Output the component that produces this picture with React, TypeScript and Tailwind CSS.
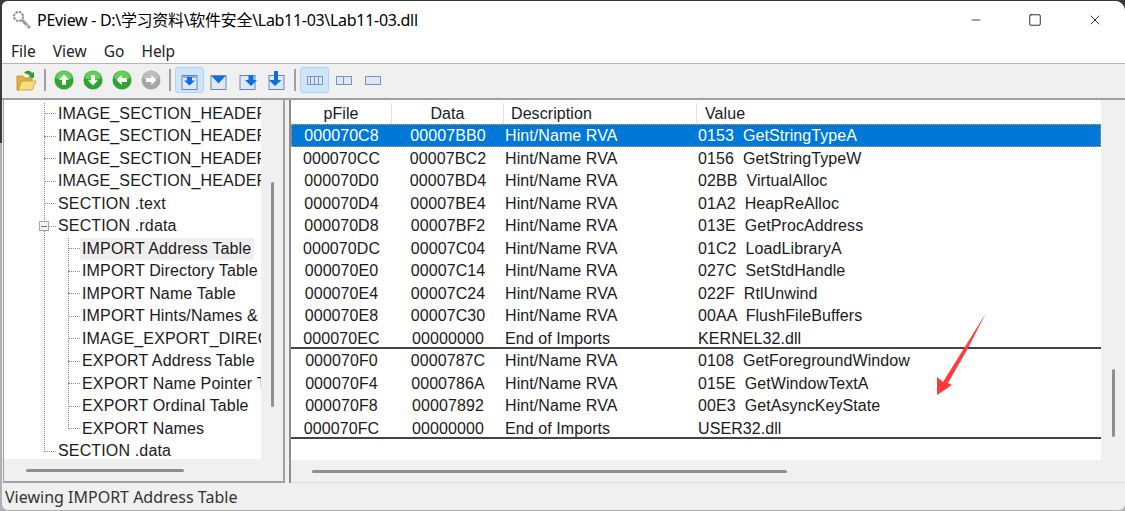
import React from "react";
import { Minus, Square, X } from "lucide-react";

const treeTop = ["IMAGE_SECTION_HEADER", "IMAGE_SECTION_HEADER", "IMAGE_SECTION_HEADER", "IMAGE_SECTION_HEADER", "SECTION .text"];
const treeChildren = [
  "IMPORT Address Table",
  "IMPORT Directory Table",
  "IMPORT Name Table",
  "IMPORT Hints/Names &",
  "IMAGE_EXPORT_DIREC",
  "EXPORT Address Table",
  "EXPORT Name Pointer T",
  "EXPORT Ordinal Table",
  "EXPORT Names",
];

const rows = [
  ["000070C8", "00007BB0", "Hint/Name RVA", "0153  GetStringTypeA"],
  ["000070CC", "00007BC2", "Hint/Name RVA", "0156  GetStringTypeW"],
  ["000070D0", "00007BD4", "Hint/Name RVA", "02BB  VirtualAlloc"],
  ["000070D4", "00007BE4", "Hint/Name RVA", "01A2  HeapReAlloc"],
  ["000070D8", "00007BF2", "Hint/Name RVA", "013E  GetProcAddress"],
  ["000070DC", "00007C04", "Hint/Name RVA", "01C2  LoadLibraryA"],
  ["000070E0", "00007C14", "Hint/Name RVA", "027C  SetStdHandle"],
  ["000070E4", "00007C24", "Hint/Name RVA", "022F  RtlUnwind"],
  ["000070E8", "00007C30", "Hint/Name RVA", "00AA  FlushFileBuffers"],
  ["000070EC", "00000000", "End of Imports", "KERNEL32.dll"],
  ["000070F0", "0000787C", "Hint/Name RVA", "0108  GetForegroundWindow"],
  ["000070F4", "0000786A", "Hint/Name RVA", "015E  GetWindowTextA"],
  ["000070F8", "00007892", "Hint/Name RVA", "00E3  GetAsyncKeyState"],
  ["000070FC", "00000000", "End of Imports", "USER32.dll"],
];

function KeyIcon() {
  return (
    <svg width="22" height="22" viewBox="0 0 22 22" className="shrink-0">
      <circle cx="7.5" cy="7.5" r="4.5" fill="none" stroke="#8a8a8a" strokeWidth="2" strokeDasharray="2.5 1" />
      <path d="M11 11l8 8" stroke="#9a9a9a" strokeWidth="3" />
      <path d="M15 18l2-2" stroke="#d0d0d0" strokeWidth="2" />
    </svg>
  );
}

function OpenIcon() {
  return (
    <svg width="22" height="24" viewBox="0 0 22 24">
      <path d="M2 8h6l2 2h7v4H7l-3 8H2z" fill="#e0b040" stroke="#b98a22" strokeWidth="0.8" />
      <path d="M7 13h14l-4 9H3z" fill="#f7dc82" stroke="#c09a30" strokeWidth="0.8" />
      <path d="M9 5c2-3 6-3 8 0l2-1v6l-6-1 2-1c-1-2-4-2-6-3z" fill="#2e9e32" />
    </svg>
  );
}

function NavIcon({ rotate, gray }: { rotate: number; gray?: boolean }) {
  return (
    <svg width="20" height="20" viewBox="0 0 20 20">
      <circle cx="10" cy="10" r="9.5" fill={gray ? "#a6a6a6" : "#2fa52f"} />
      <path d="M2 8a8 7 0 0 1 16 0c-3 2-13 2-16 0z" fill={gray ? "#bdbdbd" : "#63cf55"} />
      <g transform={`rotate(${rotate} 10 10)`}>
        <path d="M10 4.5l5 5.2h-3V15H8V9.700h-3z" fill="#fff" />
      </g>
    </svg>
  );
}

function BoxIcon({ variant }: { variant: number }) {
  return (
    <svg width="20" height="22" viewBox="0 0 20 22">
      <rect x="2" y="6.500" width="15" height="14" fill="#dfe8f6" stroke="#6d87b0" />
      {variant === 0 && <path d="M3 7h13v2H3z" fill="#8fb0dc" />}
      {variant === 0 && <path d="M9.500 16.500l5.500-5h-3V8H7v3.500H4z" fill="#0a6fe0" />}
      {variant === 1 && <path d="M2.500 7h14l-7 7.500z" fill="#0a6fe0" />}
      {variant === 2 && <path d="M13 17l6-6h-3.500V6.500h-5V11H7z" fill="#0a6fe0" />}
      {variant === 3 && <path d="M8 17l6.500-6H11V2H7v9H2z" fill="#0a6fe0" />}
    </svg>
  );
}

function PaneIcon({ cells }: { cells: number }) {
  return (
    <div className="flex h-[9px] w-[16px] border border-[#7c93b8] bg-[#dbe6f6]">
      {Array.from({ length: cells }).map((_, i) => (
        <div key={i} className="flex-1 border-r border-[#7c93b8] last:border-r-0" />
      ))}
    </div>
  );
}

function ToolButton({ active, children }: { active?: boolean; children: React.ReactNode }) {
  return (
    <div className={`flex h-[26px] w-[29px] items-center justify-center rounded-[3px] border ${active ? "border-[#a9d5f8] bg-[#cde6fb]" : "border-transparent"}`}>
      {children}
    </div>
  );
}

function Sep({ className }: { className: string }) {
  return <div className={`h-[22px] w-[2px] bg-[#a0a0a0] ${className}`} />;
}

function TreeRow({ label, selected, width }: { label: string; selected?: boolean; width: string }) {
  return (
    <div className="flex h-[22.5px] items-center">
      <div className="w-[12px] shrink-0 border-t border-dotted border-[#8a8a8a]" />
      <span className={`flex h-[22.5px] items-center overflow-hidden whitespace-pre px-[2px] ${width} ${selected ? "bg-[#efefef] pr-[3px]" : ""}`}>{label}</span>
    </div>
  );
}

export default function App() {
  return (
    <div className="h-[511px] w-[1125px] overflow-hidden bg-[linear-gradient(#3a3a3a_28%,#b0b0b0_28%)] pt-px pl-[2px] font-['Liberation_Sans',sans-serif] text-[16px] tracking-[0.15px] text-[#1a1a1a]">
      <div className="flex h-[509px] w-[1123px] flex-col overflow-hidden rounded-tr-[10px] rounded-tl-[6px] rounded-b-[6px] bg-[#f0f0f0]">
        {/* title bar */}
        <div className="flex h-[38px] shrink-0 items-center bg-white pl-[9px]">
          <KeyIcon />
          <span className="ml-[4px] font-['Noto_Sans','Noto_Sans_CJK_SC',sans-serif] text-[16px] tracking-[-0.3px] text-black">PEview - D:\学习资料\软件安全\Lab11-03\Lab11-03.dll</span>
          <div className="ml-auto flex items-center gap-[45px] pr-[22px]">
            <Minus size={14} strokeWidth={1.2} className="text-black" />
            <Square size={14} strokeWidth={1.4} className="text-black" />
            <X size={16} strokeWidth={1.2} className="text-black" />
          </div>
        </div>

        {/* menu */}
        <div className="flex h-[25px] shrink-0 items-center border-b border-[#b4b4b4] bg-white pt-[2px] pl-[9px] font-['Noto_Sans',sans-serif] text-[15.5px] tracking-normal text-[#222]">
          <span className="mr-[17px]">File</span>
          <span className="mr-[17px]">View</span>
          <span className="mr-[17px]">Go</span>
          <span>Help</span>
        </div>

        {/* toolbar */}
        <div className="flex h-[34px] shrink-0 items-center pb-[2px] pl-[9px]">
          <ToolButton><OpenIcon /></ToolButton>
          <Sep className="mr-[3px] ml-[4px]" />
          <ToolButton><NavIcon rotate={0} /></ToolButton>
          <ToolButton><NavIcon rotate={180} /></ToolButton>
          <ToolButton><NavIcon rotate={270} /></ToolButton>
          <ToolButton><NavIcon rotate={90} gray /></ToolButton>
          <Sep className="mr-[4px] ml-[4px]" />
          <ToolButton active><BoxIcon variant={0} /></ToolButton>
          <ToolButton><BoxIcon variant={1} /></ToolButton>
          <ToolButton><BoxIcon variant={2} /></ToolButton>
          <ToolButton><BoxIcon variant={3} /></ToolButton>
          <Sep className="mr-[4px] ml-[3px]" />
          <ToolButton active><PaneIcon cells={4} /></ToolButton>
          <ToolButton><PaneIcon cells={2} /></ToolButton>
          <ToolButton><PaneIcon cells={1} /></ToolButton>
        </div>

        {/* panes */}
        <div className="flex h-[385px] shrink-0 border-t-2 border-[#a0a0a0]">
          {/* tree */}
          <div className="ml-[1px] flex w-[282px] shrink-0 flex-col border-l border-r-2 border-b-2 border-[#a0a0a0]">
            <div className="flex h-[359px] shrink-0">
              <div className="w-[257px] shrink-0 overflow-hidden bg-white pt-[2.5px] pl-[40px]">
                <div className="relative whitespace-nowrap">
                  <div className="absolute top-0 bottom-[11px] left-0 border-l border-dotted border-[#8a8a8a]" />
                  {treeTop.map((t, i) => (
                    <TreeRow key={i} label={t} width="max-w-[205px]" />
                  ))}
                  <div className="relative flex h-[22.5px] items-center">
                    <div className="w-[12px] border-t border-dotted border-[#8a8a8a]" />
                    <div className="absolute top-[6px] left-[-5px] flex h-[10px] w-[10px] items-center justify-center border border-[#a6a6a6] bg-[#f2f2f2]">
                      <div className="h-px w-[6px] bg-[#5b6ba8]" />
                    </div>
                    <span className="px-[2px]">SECTION .rdata</span>
                  </div>
                  <div className="relative ml-[24px]">
                    <div className="absolute top-0 bottom-[11px] left-0 border-l border-dotted border-[#8a8a8a]" />
                    {treeChildren.map((t, i) => (
                      <TreeRow key={t} label={t} selected={i === 0} width="max-w-[181px]" />
                    ))}
                  </div>
                  <TreeRow label="SECTION .data" width="max-w-[205px]" />
                </div>
              </div>
              <div className="flex w-[23px] shrink-0 justify-center pt-[82px]">
                <div className="h-[225px] w-[3px] rounded-full bg-[#8f8f8f]" />
              </div>
            </div>
            <div className="flex flex-1 items-center pl-[22px]">
              <div className="h-[3px] w-[158px] rounded-full bg-[#8f8f8f]" />
            </div>
          </div>

          {/* table */}
          <div className="ml-[4px] flex min-w-0 flex-1 flex-col border-l-2 border-[#8c8c8c]">
            <div className="flex h-[360px] shrink-0">
              <div className="w-[810px] shrink-0 bg-white tracking-[0.08px]">
                <div className="grid h-[24px] grid-cols-[101px_112px_193px_1fr] items-center pt-[3px]">
                  <div className="border-r border-[#e0e0e0] text-center leading-[21px]">pFile</div>
                  <div className="border-r border-[#e0e0e0] text-center leading-[21px]">Data</div>
                  <div className="border-r border-[#e0e0e0] pl-[7px] leading-[21px]">Description</div>
                  <div className="pl-[8px] leading-[21px]">Value</div>
                </div>
                {rows.map((r, i) => {
                  const selected = i === 0;
                  const rule = i === 9 || i === 13;
                  return (
                    <div
                      key={r[0]}
                      className={`grid h-[22.5px] grid-cols-[101px_112px_193px_1fr] items-center whitespace-pre ${selected ? "bg-[#0078d7] text-white outline outline-offset-[-1px] outline-dotted outline-[#f0a040]" : ""} ${rule ? "border-b-2 border-[#444]" : ""}`}
                    >
                      <div className="text-center">{r[0]}</div>
                      <div className="text-center">{r[1]}</div>
                      <div className="pl-[1px]">{r[2]}</div>
                      <div className="pl-[1px]">{r[3]}</div>
                    </div>
                  );
                })}
              </div>
              <div className="flex flex-1 justify-end pr-[10px] pt-[269px]">
                <div className="h-[68px] w-[3px] rounded-full bg-[#8f8f8f]" />
              </div>
            </div>
            <div className="flex flex-1 items-center border-b border-[#dcdcdc] pl-[21px]">
              <div className="h-[3px] w-[475px] rounded-full bg-[#8f8f8f]" />
            </div>
          </div>
        </div>

        {/* status bar */}
        <div className="flex flex-1 items-center pl-[3px] font-['Noto_Sans',sans-serif] text-[16px] tracking-normal text-[#333]">
          Viewing IMPORT Address Table
        </div>
      </div>

      {/* annotation arrow */}
      <svg width="60" height="90" viewBox="0 0 60 90" className="absolute top-[311px] left-[933px]">
        <path d="M53 2L34 39 15 72l4 2L4 84V66l6 5z" fill="#ff3b3b" />
      </svg>
    </div>
  );
}
